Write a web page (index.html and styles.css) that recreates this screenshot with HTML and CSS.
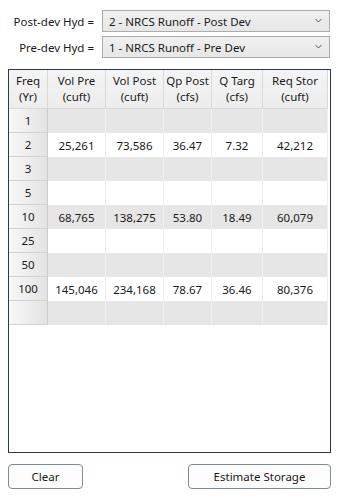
FILE: index.html
```html
<!DOCTYPE html>
<html>
<head>
<meta charset="utf-8">
<link rel="stylesheet" href="styles.css">
</head>
<body>
<div class="app">
  <div class="selectors">
    <div class="sel-row">
      <span class="sel-label">Post-dev Hyd =</span>
      <div class="combo"><span>2 - NRCS Runoff - Post Dev</span><svg class="chev" width="7" height="5" viewBox="0 0 7 5"><path d="M0.5 1 L3.5 4 L6.5 1" fill="none" stroke="#555" stroke-width="1"/></svg></div>
    </div>
    <div class="sel-row">
      <span class="sel-label">Pre-dev Hyd =</span>
      <div class="combo"><span>1 - NRCS Runoff - Pre Dev</span><svg class="chev" width="7" height="5" viewBox="0 0 7 5"><path d="M0.5 1 L3.5 4 L6.5 1" fill="none" stroke="#555" stroke-width="1"/></svg></div>
    </div>
  </div>

  <div class="gridbox">
    <div class="grid">
      <div class="hc">Freq<br>(Yr)</div>
      <div class="hc">Vol Pre<br>(cuft)</div>
      <div class="hc">Vol Post<br>(cuft)</div>
      <div class="hc">Qp Post<br>(cfs)</div>
      <div class="hc">Q Targ<br>(cfs)</div>
      <div class="hc">Req Stor<br>(cuft)</div>

      <div class="rh">1</div><div class="c g"></div><div class="c g"></div><div class="c g"></div><div class="c g"></div><div class="c g"></div>
      <div class="rh">2</div><div class="c">25,261</div><div class="c">73,586</div><div class="c">36.47</div><div class="c">7.32</div><div class="c">42,212</div>
      <div class="rh">3</div><div class="c g"></div><div class="c g"></div><div class="c g"></div><div class="c g"></div><div class="c g"></div>
      <div class="rh">5</div><div class="c"></div><div class="c"></div><div class="c"></div><div class="c"></div><div class="c"></div>
      <div class="rh">10</div><div class="c g">68,765</div><div class="c g">138,275</div><div class="c g">53.80</div><div class="c g">18.49</div><div class="c g">60,079</div>
      <div class="rh">25</div><div class="c"></div><div class="c"></div><div class="c"></div><div class="c"></div><div class="c"></div>
      <div class="rh">50</div><div class="c g"></div><div class="c g"></div><div class="c g"></div><div class="c g"></div><div class="c g"></div>
      <div class="rh">100</div><div class="c">145,046</div><div class="c">234,168</div><div class="c">78.67</div><div class="c">36.46</div><div class="c">80,376</div>
      <div class="rh"></div><div class="c g"></div><div class="c g"></div><div class="c g"></div><div class="c g"></div><div class="c g"></div>
    </div>
  </div>

  <div class="buttons">
    <button class="btn btn-clear">Clear</button>
    <button class="btn btn-est">Estimate Storage</button>
  </div>
</div>
</body>
</html>
```

FILE: styles.css
```css
* { box-sizing: border-box; }
html, body {
  margin: 0;
  padding: 0;
  background: #ffffff;
}
body {
  font-family: "Noto Sans", "Open Sans", sans-serif;
  font-size: 11.5px;
  color: #1a1a1a;
  width: 338px;
  height: 503px;
}
.app {
  padding: 10px 8px 0 8px;
}
.selectors {
  display: flex;
  flex-direction: column;
  gap: 4px;
}
.sel-row {
  display: flex;
  align-items: center;
}
.sel-label {
  width: 86px;
  text-align: right;
  margin-right: 8px;
  white-space: nowrap;
}
.combo {
  width: 228px;
  height: 22px;
  border: 1px solid #acacac;
  background: linear-gradient(#f0f0f0, #e6e6e6);
  display: flex;
  align-items: center;
  justify-content: space-between;
  padding: 0 7px 0 6px;
  white-space: nowrap;
}
.chev { margin-top: -2px; }
.gridbox {
  margin-top: 11px;
  width: 323px;
  height: 384px;
  border: 1px solid #2a3560;
  background: #ffffff;
}
.grid {
  display: grid;
  grid-template-columns: 39px 58px 58px 48px 51px 65px;
  grid-template-rows: 39px repeat(9, 24px);
}
.hc {
  background: linear-gradient(#f4f4f4, #ededed);
  border-right: 1px solid #d9d9d9;
  border-bottom: 1px solid #d9d9d9;
  text-align: center;
  line-height: 16px;
  padding-top: 3px;
}
.rh {
  background: linear-gradient(to right, #f8f8f8, #e3e3e3);
  border-right: 1px solid #cfcfcf;
  border-bottom: 1px solid #d2d2d2;
  display: flex;
  align-items: center;
  justify-content: center;
}
.c {
  border-right: 1px solid #ececec;
  display: flex;
  align-items: center;
  justify-content: center;
  background: #ffffff;
}
.c.g { background: #e6e6e6; border-right-color: #f0f0f0; }
.buttons {
  display: flex;
  justify-content: space-between;
  margin-top: 11px;
  width: 323px;
}
.btn {
  font-family: inherit;
  font-size: 11.5px;
  color: #1a1a1a;
  height: 25px;
  border: 1px solid #7d8b99;
  border-radius: 4px;
  background: #fdfdfd;
  padding: 0;
}
.btn-clear { width: 75px; }
.btn-est { width: 143px; }
```
